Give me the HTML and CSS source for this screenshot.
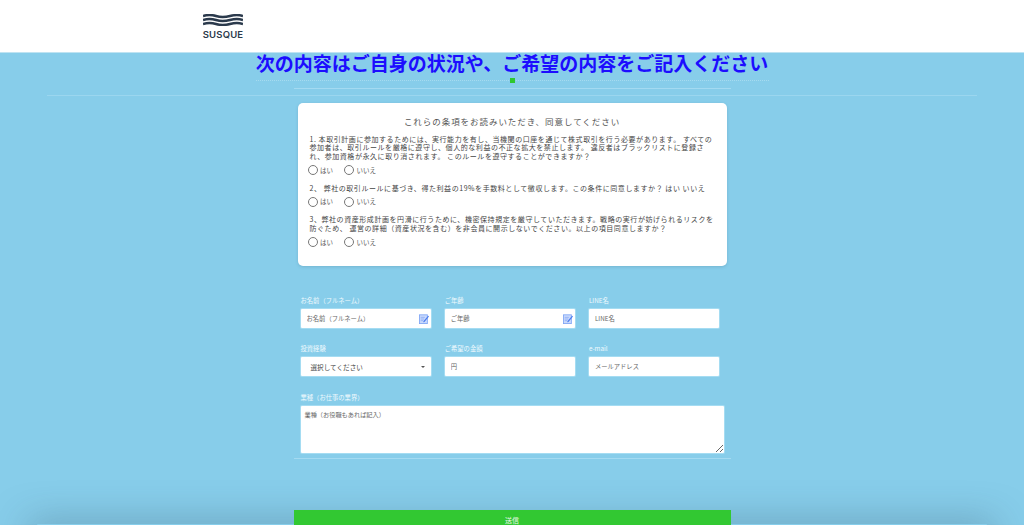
FILE: index.html
```html
<!DOCTYPE html>
<html lang="ja">
<head>
<meta charset="utf-8">
<title>SUSQUE</title>
<link rel="stylesheet" href="styles.css">
</head>
<body>
<header class="site-header">
  <div class="logo">
    <svg class="logo-waves" width="40" height="12" viewBox="0 0 40 12">
      <path d="M0 2c5-1.500 8-1.500 13 0s8 1.500 14 0 8-1.500 13 0M0 6c5-1.500 8-1.500 13 0s8 1.500 14 0 8-1.500 13 0M0 10c5-1.500 8-1.500 13 0s8 1.500 14 0 8-1.500 13 0" fill="none" stroke="#2b3a4c" stroke-width="2.500"/>
    </svg>
    <span class="logo-text">SUSQUE</span>
  </div>
</header>
<main class="main">
  <h1 class="title">次の内容はご自身の状況や、ご希望の内容をご記入ください</h1>
  <div class="title-rule"><span class="title-dot"></span></div>
  <div class="rule-narrow"></div>
  <div class="rule-wide"></div>

  <section class="card">
    <h2 class="card-title">これらの条項をお読みいただき、同意してください</h2>
    <p class="q">1. 本取引計画に参加するためには、実行能力を有し、当機関の口座を通じて株式取引を行う必要があります。 すべての参加者は、取引ルールを厳格に遵守し、個人的な利益の不正な拡大を禁止します。 違反者はブラックリストに登録され、参加資格が永久に取り消されます。 このルールを遵守することができますか？</p>
    <div class="answers">
      <label class="answer"><input type="radio" name="q1">はい</label>
      <label class="answer"><input type="radio" name="q1">いいえ</label>
    </div>
    <p class="q">2、 弊社の取引ルールに基づき、得た利益の19%を手数料として徴収します。この条件に同意しますか？ はい いいえ</p>
    <div class="answers">
      <label class="answer"><input type="radio" name="q2">はい</label>
      <label class="answer"><input type="radio" name="q2">いいえ</label>
    </div>
    <p class="q">3、弊社の資産形成計画を円滑に行うために、機密保持規定を厳守していただきます。戦略の実行が妨げられるリスクを防ぐため、 運営の詳細（資産状況を含む）を非会員に開示しないでください。以上の項目同意しますか？</p>
    <div class="answers">
      <label class="answer"><input type="radio" name="q3">はい</label>
      <label class="answer"><input type="radio" name="q3">いいえ</label>
    </div>
  </section>

  <form class="form">
    <div class="grid">
      <div class="field">
        <label class="label">お名前（フルネーム）</label>
        <div class="input has-icon">
          <input type="text" placeholder="お名前（フルネーム）">
          <svg class="edit" width="10" height="10" viewBox="0 0 12 12"><rect x="0.500" y="1" width="9.500" height="10.500" fill="#c9d9fc" stroke="#7da3f5"/><path d="M2 4h5M2 6h4M2 8h3" stroke="#7da3f5" stroke-width=".8"/><path d="M5.500 8.500 11 2l1 1-5.500 6.500-1.500.5z" fill="#4a7cee"/></svg>
        </div>
      </div>
      <div class="field">
        <label class="label">ご年齢</label>
        <div class="input has-icon">
          <input type="text" placeholder="ご年齢">
          <svg class="edit" width="10" height="10" viewBox="0 0 12 12"><rect x="0.500" y="1" width="9.500" height="10.500" fill="#c9d9fc" stroke="#7da3f5"/><path d="M2 4h5M2 6h4M2 8h3" stroke="#7da3f5" stroke-width=".8"/><path d="M5.500 8.500 11 2l1 1-5.500 6.500-1.500.5z" fill="#4a7cee"/></svg>
        </div>
      </div>
      <div class="field">
        <label class="label">LINE名</label>
        <div class="input"><input type="text" placeholder="LINE名"></div>
      </div>
      <div class="field">
        <label class="label">投資経験</label>
        <div class="input select"><span class="select-text">選択してください</span><span class="caret"></span></div>
      </div>
      <div class="field">
        <label class="label">ご希望の金額</label>
        <div class="input"><input type="text" placeholder="円"></div>
      </div>
      <div class="field">
        <label class="label">e-mail</label>
        <div class="input"><input type="text" placeholder="メールアドレス"></div>
      </div>
    </div>
    <div class="field-wide">
      <label class="label">業種（お仕事の業界）</label>
      <textarea class="textarea" placeholder="業種（お役職もあれば記入）"></textarea>
    </div>
  </form>
  <div class="rule-form"></div>
  <div class="footer-band">
    <button class="submit" type="button">送信</button>
  </div>
</main>
</body>
</html>
```
FILE: styles.css
```css
* { box-sizing: border-box; }
html, body { margin: 0; height: 525px; overflow: hidden; }
body {
  background: #87cdea;
  font-family: "Liberation Sans", "Noto Sans CJK JP", sans-serif;
}
.site-header {
  height: 53px;
  background: #fff;
  border-bottom: 1px solid #bfe3f2;
  padding: 14px 0 0 203px;
}
.logo { width: 40px; display: flex; flex-direction: column; align-items: center; }
.logo-waves { display: block; }
.logo-text {
  margin-top: 3px;
  font: 600 9.500px/11px "Inter", sans-serif;
  letter-spacing: .2px;
  color: #2b3a4c;
}
.main { display: flex; flex-direction: column; align-items: center; }
.title {
  margin: -1px 0 0;
  height: 22px;
  font: 700 19px/21px "Noto Sans CJK JP", sans-serif;
  color: #1c0dff;
  white-space: nowrap;
}
.title-rule {
  width: 513px;
  height: 0;
  margin-top: 6px;
  border-top: 1px dotted #a6dbf0;
  position: relative;
}
.title-dot {
  position: absolute;
  left: 254px;
  top: -3px;
  width: 5px;
  height: 5px;
  background: #2fc72f;
}
.rule-narrow { width: 437px; height: 1px; margin-top: 7px; background: #a4daf1; }
.rule-wide { width: 930px; height: 1px; margin-top: 6px; background: #9bd6ef; }
.card {
  width: 429px;
  height: 163px;
  margin-top: 7px;
  padding: 12px 12px 0;
  background: #fff;
  border-radius: 5px;
  box-shadow: 0 1px 3px rgba(60, 110, 140, .25);
  color: #555;
}
.card-title {
  margin: 0 0 7.500px;
  font: 400 8.500px/12px "Noto Sans CJK JP", sans-serif;
  letter-spacing: .95px;
  text-align: center;
}
.q {
  margin: 0;
  font: 400 7px/8.700px "Noto Sans CJK JP", sans-serif;
  letter-spacing: .56px;
  color: #444;
}
.answers { display: flex; gap: 11px; margin: 4.650px 0 8.350px -2px; height: 10px; }
.answer {
  display: flex;
  align-items: center;
  gap: 2.500px;
  font: 400 6.500px/9px "Noto Sans CJK JP", sans-serif;
  color: #555;
}
.answer input {
  appearance: none;
  margin: 0;
  width: 10px;
  height: 10px;
  border: 1px solid #777;
  border-radius: 50%;
  background: #fff;
}
.form { width: 437px; margin-top: 30px; padding: 0 7px; }
.grid { display: grid; grid-template-columns: repeat(3, 130.200px); column-gap: 14px; row-gap: 16.300px; }
.label {
  display: block;
  height: 13px;
  font: 400 6.300px/9px "Noto Sans CJK JP", sans-serif;
  color: #f0fafe;
}
.input {
  height: 19px;
  background: #fff;
  border-radius: 1px;
  display: flex;
  align-items: center;
  padding: 0 6px;
  box-shadow: 0 0 0 1px #a5dcf2;
}
.input input {
  flex: 1;
  min-width: 0;
  border: 0;
  padding: 0;
  outline: 0;
  background: none;
  font: 400 6.300px/10px "Noto Sans CJK JP", sans-serif;
}
.input input::placeholder, .textarea::placeholder { color: #666; opacity: 1; }
.edit { flex: none; margin-right: -4px; }
.select { justify-content: space-between; padding: 0 6px 0 10px; }
.select-text { font: 400 6.600px/10px "Noto Sans CJK JP", sans-serif; color: #444; }
.caret { width: 0; height: 0; border: 2px solid transparent; border-top: 2px solid #555; border-bottom: 0; }
.field-wide { margin-top: 16.700px; width: 423px; }
.textarea {
  display: block;
  width: 423px;
  height: 47px;
  padding: 4px 4px;
  border: 0;
  border-radius: 1px;
  box-shadow: 0 0 0 1px #a5dcf2;
  background: #fff;
  font: 400 6.200px/10px "Noto Sans CJK JP", sans-serif;
}
.rule-form { width: 437px; height: 1px; margin-top: 5px; background: #a4daf1; }
.footer-band {
  position: relative;
  width: 950px;
  height: 15px;
  margin-top: 51px;
  display: flex;
  justify-content: center;
}
.footer-band::before {
  content: "";
  position: absolute;
  left: 0;
  right: 0;
  top: 14px;
  height: 1px;
  border-radius: 20px;
  box-shadow: 0 8px 36px 8px rgba(50, 80, 100, .5);
}
.submit {
  position: relative;
  width: 437px;
  height: 15px;
  border: 0;
  background: #32c832;
  color: #e8f8e8;
  padding: 6px 0 0;
  font: 400 7px/9px "Noto Sans CJK JP", sans-serif;
}
```
